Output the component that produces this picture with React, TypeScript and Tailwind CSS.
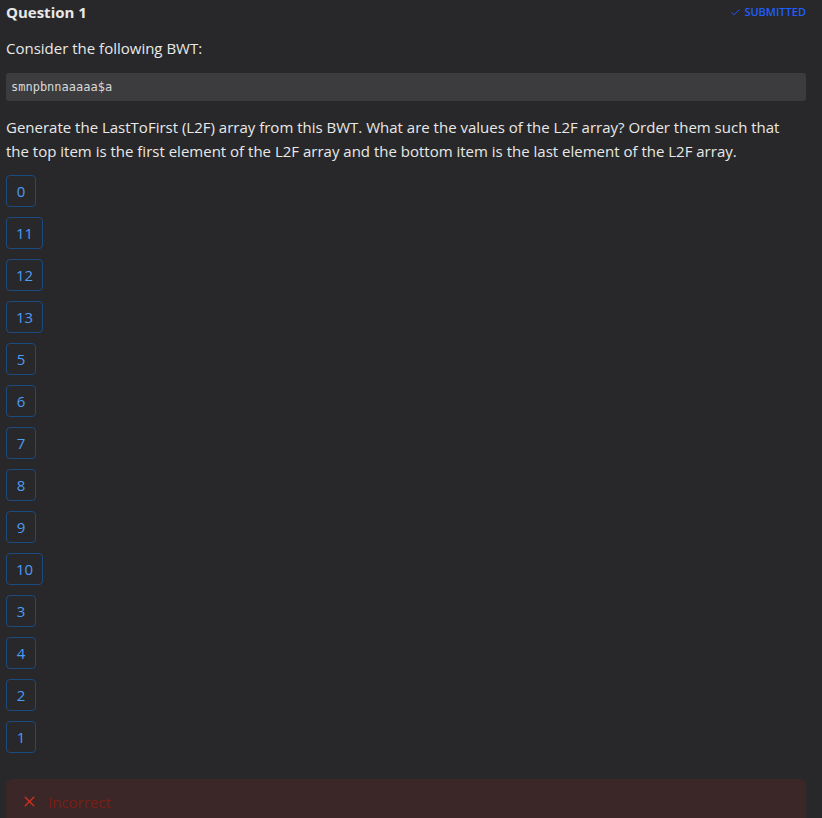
import { Check, X } from "lucide-react";

const values = ["0", "11", "12", "13", "5", "6", "7", "8", "9", "10", "3", "4", "2", "1"];

export default function App() {
  return (
    <div className="min-h-[818px] bg-[#28282a] text-[#e8e8e8] pl-[6px] pr-4 pt-[1px] font-['Open_Sans',sans-serif] overflow-hidden h-[818px]">
      {/* Encabezado */}
      <div className="flex items-center justify-between h-[22px]">
        <h2 className="text-[15px] font-bold leading-[22px]">Question 1</h2>
        <div className="flex items-center gap-[3px] text-[#1f5eff] text-[11px] font-semibold uppercase">
          <Check size={11} strokeWidth={2} />
          <span>Submitted</span>
        </div>
      </div>

      <p className="mt-[14px] text-[15px] leading-[22px]">Consider the following BWT:</p>

      <div className="mt-[14px] h-[28px] rounded-[3px] bg-[#3c3c3f] px-[5px] flex items-center font-['DejaVu_Sans_Mono',monospace] text-[12px] text-[#d8d8d8]">
        smnpbnnaaaaa$a
      </div>

      <p className="mt-[14px] text-[15px] leading-[24px]">
        Generate the LastToFirst (L2F) array from this BWT. What are the values of the L2F array? Order them such that the top item is the first element of the L2F array and the bottom item is the last element of the L2F array.
      </p>

      {/* Lista de valores */}
      <div className="mt-[12px] flex flex-col gap-[10px] items-start">
        {values.map((v, i) => (
          <div
            key={i}
            className="h-[32px] min-w-[30px] px-[9px] rounded-[4px] border border-[#1b4a80] text-[#4d9bf2] text-[15px] flex items-center justify-center"
          >
            {v}
          </div>
        ))}
      </div>

      {/* Resultado */}
      <div className="mt-[26px] h-[60px] rounded-[6px] bg-[#3b2727] flex items-start pt-[13px] pl-[15px] gap-[10px]">
        <X size={17} strokeWidth={1.8} className="text-[#d62f1c] mt-[1px]" />
        <span className="text-[15px] text-[#7d1d14] leading-[20px]">Incorrect</span>
      </div>
    </div>
  );
}
